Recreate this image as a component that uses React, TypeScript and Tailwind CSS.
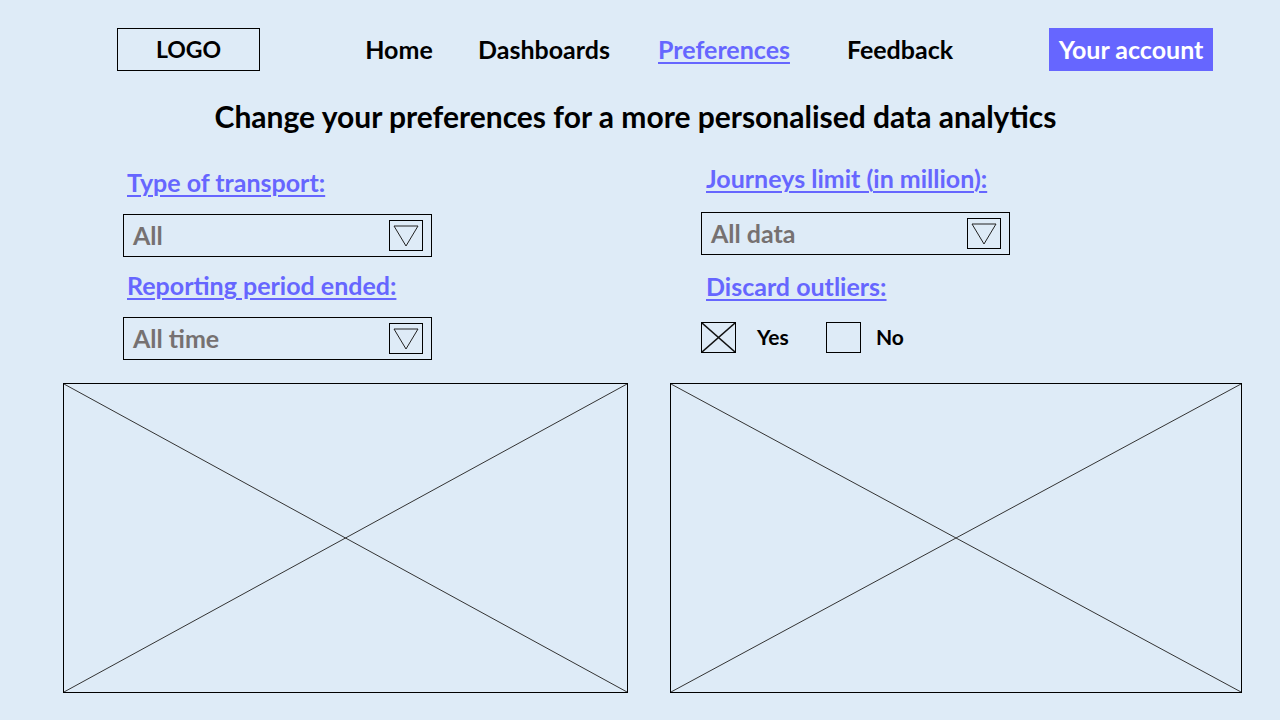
import React from "react";

const Arrow = () => (
  <div className="w-[34px] h-[31px] border border-black flex items-center justify-center">
    <svg width="28" height="25" viewBox="0 0 28 25">
      <polyline points="2,3 26,3 14,23 2,3" fill="none" stroke="#222" strokeWidth="1" />
    </svg>
  </div>
);

const Select = ({ value }: { value: string }) => (
  <div className="w-[309px] h-[43px] border border-black flex items-center justify-between pl-[9px] pr-[8px]">
    <span className="text-[#767171] text-[25px] font-bold">{value}</span>
    <Arrow />
  </div>
);

const Label = ({ children }: { children: React.ReactNode }) => (
  <div className="text-[#6666FF] text-[25px] font-bold underline underline-offset-[3px] decoration-2">{children}</div>
);

const Placeholder = ({ w }: { w: string }) => (
  <div className={`${w} h-[310px] border border-black relative`}>
    <svg className="absolute inset-0 w-full h-full" preserveAspectRatio="none" viewBox="0 0 100 100">
      <line x1="0" y1="0" x2="100" y2="100" stroke="#333" strokeWidth="1" vectorEffect="non-scaling-stroke" />
      <line x1="100" y1="0" x2="0" y2="100" stroke="#333" strokeWidth="1" vectorEffect="non-scaling-stroke" />
    </svg>
  </div>
);

export default function App() {
  return (
    <div className="w-[1280px] h-[720px] bg-[#DEEBF7] overflow-hidden" style={{ fontFamily: "Lato, 'Noto Sans', sans-serif" }}>
      <div className="flex items-center h-[43px] mt-[28px] pl-[117px] text-[25px] font-bold">
        <div className="w-[143px] h-[43px] border border-black flex items-center justify-center text-black text-[23px]">LOGO</div>
        <div className="w-[140px] ml-[69px] text-center text-black">Home</div>
        <div className="w-[150px] text-center text-black">Dashboards</div>
        <div className="w-[210px] text-center text-[#6666FF] underline underline-offset-[3px] decoration-2">Preferences</div>
        <div className="w-[142px] text-center text-black">Feedback</div>
        <div className="ml-[78px] w-[164px] h-[43px] bg-[#6666FF] text-white flex items-center justify-center">Your account</div>
      </div>
      <div className="text-center text-black text-[30px] leading-[42px] font-bold mt-[24px] pr-[9px]">
        Change your preferences for a more personalised data analytics
      </div>
      <div className="flex mt-[20px]">
        <div className="ml-[123px] w-[578px] flex flex-col">
          <div className="pl-[4px] h-[38px] flex items-center mt-[7px]"><Label>Type of transport:</Label></div>
          <div className="mt-[12px]"><Select value="All" /></div>
          <div className="pl-[4px] h-[38px] flex items-center mt-[10px]"><Label>Reporting period ended:</Label></div>
          <div className="mt-[12px]"><Select value="All time" /></div>
        </div>
        <div className="flex flex-col">
          <div className="pl-[5px] h-[38px] flex items-center mt-[3px]"><Label>Journeys limit (in million):</Label></div>
          <div className="mt-[14px]"><Select value="All data" /></div>
          <div className="pl-[5px] h-[38px] flex items-center mt-[13px]"><Label>Discard outliers:</Label></div>
          <div className="flex items-center mt-[15px] h-[32px] text-[21px] font-bold text-black">
            <div className="w-[35px] h-[31px] border border-black relative">
              <svg className="absolute inset-0 w-full h-full" preserveAspectRatio="none" viewBox="0 0 100 100">
                <line x1="0" y1="0" x2="100" y2="100" stroke="#111" strokeWidth="1.5" vectorEffect="non-scaling-stroke" />
                <line x1="100" y1="0" x2="0" y2="100" stroke="#111" strokeWidth="1.5" vectorEffect="non-scaling-stroke" />
              </svg>
            </div>
            <span className="ml-[21px] w-[69px]">Yes</span>
            <div className="w-[35px] h-[31px] border border-black" />
            <span className="ml-[15px]">No</span>
          </div>
        </div>
      </div>
      <div className="flex mt-[23px] pl-[63px]">
        <Placeholder w="w-[565px]" />
        <div className="ml-[42px]"><Placeholder w="w-[572px]" /></div>
      </div>
    </div>
  );
}
